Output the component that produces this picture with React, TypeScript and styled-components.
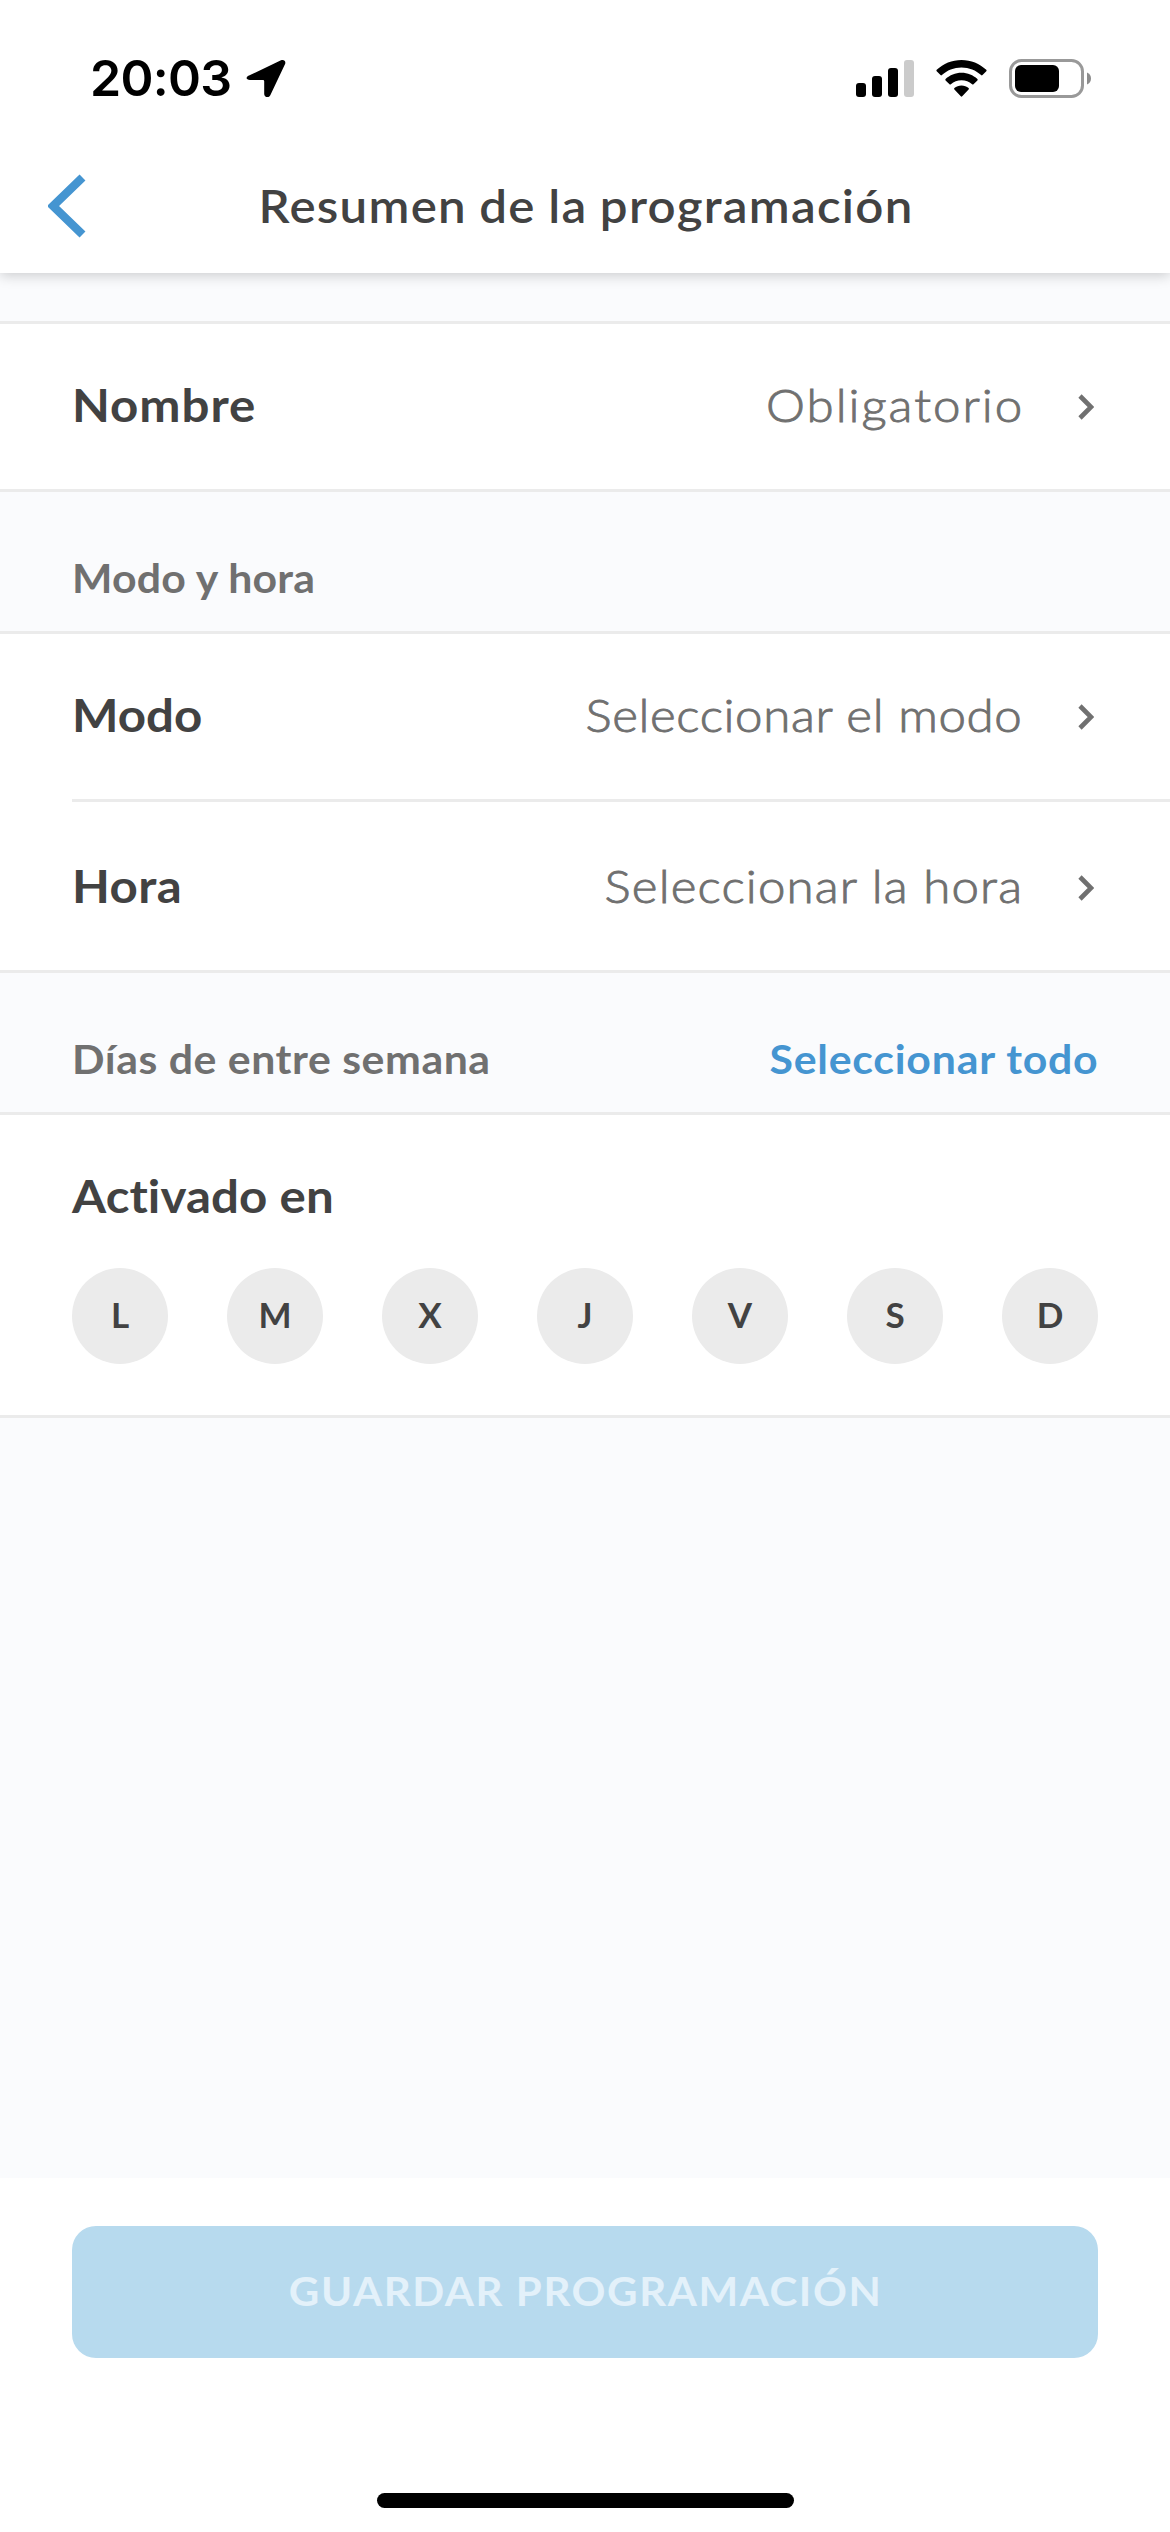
import React from "react";
import styled, { createGlobalStyle } from "styled-components";

const color = {
  ink: "#424242",
  muted: "#707070",
  blue: "#4595d1",
  line: "#ebebeb",
  page: "#fafbfd",
  button: "#b7daee",
  buttonText: "#e3f1fa",
};

const GlobalStyle = createGlobalStyle`
  *, *::before, *::after { box-sizing: border-box; }
  body { margin: 0; background: #fff; }
  button { border: 0; margin: 0; padding: 0; background: none; font: inherit; color: inherit; }
`;

const Screen = styled.div`
  display: flex;
  flex-direction: column;
  width: 1170px;
  height: 2532px;
  overflow: hidden;
  background: ${color.page};
  color: ${color.ink};
  font-family: Lato, "Open Sans", sans-serif;
`;

const Text = styled.span<{ $track: number; $stretch?: number; $origin?: "left" | "center" | "right" }>`
  display: inline-block;
  letter-spacing: ${(p) => p.$track}px;
  margin-right: ${(p) => -p.$track}px;
  white-space: pre;
  transform: scaleX(${(p) => p.$stretch ?? 1.07});
  transform-origin: ${(p) => p.$origin ?? "left"} center;
`;

const Header = styled.header`
  position: relative;
  z-index: 1;
  flex: none;
  height: 273px;
  background: #fff;
  box-shadow: 0 3px 12px rgba(0, 0, 0, 0.18);
`;

const StatusBar = styled.div`
  display: flex;
  justify-content: space-between;
  height: 140px;
  padding: 48px 79px 0 90px;
`;

const StatusGroup = styled.div<{ $gap: number }>`
  display: flex;
  align-items: center;
  gap: ${(p) => p.$gap}px;
  height: 60px;
  color: #000;
`;

const Clock = styled.span`
  margin-right: 1px;
  font-family: Inter, sans-serif;
  font-size: 50px;
  font-weight: 600;
  line-height: 60px;
  letter-spacing: -0.7px;
`;

const NavBar = styled.div`
  display: grid;
  grid-template-columns: 120px 1fr 120px;
  align-items: center;
  height: 132px;
`;

const BackButton = styled.button`
  display: flex;
  padding-left: 48px;
  color: ${color.blue};
`;

const Title = styled.h1`
  margin: 0;
  text-align: center;
  font-size: 46px;
  font-weight: 600;
  line-height: 56px;
  word-spacing: -1px;
`;

const Content = styled.main`
  flex: 1;
  padding-top: 48px;
`;

const Group = styled.section`
  background: #fff;
  border-top: 3px solid ${color.line};
  border-bottom: 3px solid ${color.line};
`;

const Row = styled.div`
  display: flex;
  align-items: center;
  height: 165px;
  padding: 0 76px 0 72px;
`;

const Divider = styled.hr`
  height: 3px;
  margin: 0 0 3px 72px;
  border: 0;
  background: ${color.line};
`;

const Label = styled.span`
  padding-bottom: 3px;
  font-size: 46px;
  font-weight: 700;
  line-height: 56px;
`;

const Value = styled.span`
  margin-left: auto;
  padding-bottom: 3px;
  color: ${color.muted};
  font-size: 46px;
  font-weight: 300;
  line-height: 56px;
  -webkit-text-stroke: 0.9px ${color.muted};
`;

const Chevron = styled.svg`
  flex: none;
  margin-left: 56px;
  color: ${color.muted};
`;

const SectionHeader = styled.div`
  display: flex;
  align-items: flex-end;
  justify-content: space-between;
  height: 139px;
  padding: 0 72px 29px;
  color: ${color.muted};
  font-size: 40px;
  font-weight: 700;
  line-height: 48px;
`;

const SelectAll = styled.button`
  color: ${color.blue};
`;

const DaysPanel = styled.div`
  padding: 53px 72px 51px;
`;

const DaysTitle = styled.div`
  height: 55px;
  margin-bottom: 45px;
  font-size: 46px;
  font-weight: 700;
  line-height: 55px;
`;

const Days = styled.div`
  display: flex;
  justify-content: space-between;
`;

const Day = styled.button`
  width: 96px;
  height: 96px;
  padding-bottom: 5px;
  border-radius: 50%;
  background: ${color.line};
  font-size: 35px;
  font-weight: 700;
  line-height: 44px;
`;

const Footer = styled.footer`
  display: flex;
  flex-direction: column;
  align-items: center;
  justify-content: space-between;
  flex: none;
  height: 354px;
  padding: 48px 72px 24px;
  background: #fff;
`;

const SaveButton = styled.button`
  width: 100%;
  height: 132px;
  padding-bottom: 3px;
  border-radius: 24px;
  background: ${color.button};
  color: ${color.buttonText};
  font-size: 40px;
  font-weight: 700;
`;

const HomeIndicator = styled.div`
  width: 417px;
  height: 15px;
  border-radius: 8px;
  background: #000;
`;

const LocationIcon = () => (
  <svg width="40" height="40" viewBox="0 0 40 40">
    <path
      d="M3 17.5 35 2.3 C37.5 1.1 40 2.9 39.2 5.7 L24.3 37.2 C23 40.1 18.2 39.6 18.2 36 V23.2 Q18.2 22 17 22 H4 C0 22 -.7 19.2 3 17.5Z"
      fill="currentColor"
    />
  </svg>
);

const SignalIcon = () => (
  <svg width="58" height="37" viewBox="0 0 58 37" fill="currentColor">
    <rect x="0" y="23" width="10" height="14" rx="3" />
    <rect x="16" y="16" width="10" height="21" rx="3" />
    <rect x="32" y="8" width="10" height="29" rx="3" />
    <rect x="48" y="0" width="10" height="37" rx="3" fill="#cbcbcb" />
  </svg>
);

const WifiIcon = () => (
  <svg width="51" height="37" viewBox="0 0 51 37" fill="currentColor">
    <path d="M25.5 0C35 0 43.700 3.700 50.300 9.800Q51 10.500 50.300 11.200L46.500 15.100Q45.800 15.700 45.100 15.100C40 10.300 33 7.500 25.500 7.500S11 10.300 5.900 15.100Q5.200 15.700 4.500 15.100L.7 11.200Q0 10.500.7 9.800C7.300 3.700 16 0 25.500 0Z" />
    <path d="M25.500 12.800C31.700 12.800 37.200 15.200 41.400 19Q42.100 19.700 41.400 20.400L37.500 24.300Q36.800 24.900 36.100 24.300C33.200 21.800 29.600 20.300 25.500 20.300S17.800 21.800 14.900 24.300Q14.200 24.900 13.500 24.300L9.600 20.400Q8.900 19.700 9.600 19C13.800 15.200 19.300 12.800 25.500 12.800Z" />
    <path d="M25.500 25.500C28.200 25.500 30.700 26.500 32.600 28.100Q33.300 28.800 32.600 29.500L26.200 36.300Q25.500 37 24.800 36.300L18.400 29.500Q17.700 28.800 18.400 28.100C20.300 26.500 22.800 25.500 25.500 25.500Z" />
  </svg>
);

const BatteryIcon = () => (
  <svg width="82" height="39" viewBox="0 0 82 39">
    <rect x="1.500" y="1.500" width="72" height="36" rx="11" fill="none" stroke="#999" strokeWidth="3" />
    <rect x="6" y="6" width="44" height="27" rx="6" fill="currentColor" />
    <path d="M78 13.500C80.500 14.500 82 16.800 82 19.500S80.500 24.500 78 25.500Z" fill="#8c8c8c" />
  </svg>
);

const BackIcon = () => (
  <svg width="38" height="64" viewBox="0 0 38 64">
    <path d="M34.500 3.500 5 32 34.500 60.500" fill="none" stroke="currentColor" strokeWidth="8.500" />
  </svg>
);

const ChevronIcon = () => (
  <Chevron width="16" height="26" viewBox="0 0 16 26">
    <path d="M2 2 13 13 2 24" fill="none" stroke="currentColor" strokeWidth="4.600" />
  </Chevron>
);

type RowProps = { label: string; labelTrack: number; value: string; valueTrack: number };

const SettingRow = ({ label, labelTrack, value, valueTrack }: RowProps) => (
  <Row>
    <Label>
      <Text $track={labelTrack}>{label}</Text>
    </Label>
    <Value>
      <Text $track={valueTrack} $origin="right">{value}</Text>
    </Value>
    <ChevronIcon />
  </Row>
);

const weekdays = ["L", "M", "X", "J", "V", "S", "D"];

export default function App() {
  return (
    <Screen>
      <GlobalStyle />
      <Header>
        <StatusBar>
          <StatusGroup $gap={14}>
            <Clock>20:03</Clock>
            <LocationIcon />
          </StatusGroup>
          <StatusGroup $gap={22}>
            <SignalIcon />
            <WifiIcon />
            <BatteryIcon />
          </StatusGroup>
        </StatusBar>
        <NavBar>
          <BackButton aria-label="Atrás">
            <BackIcon />
          </BackButton>
          <Title>
            <Text $track={1.18} $origin="center">Resumen de la programación</Text>
          </Title>
        </NavBar>
      </Header>

      <Content>
        <Group>
          <SettingRow label="Nombre" labelTrack={0.9} value="Obligatorio" valueTrack={1.87} />
        </Group>

        <SectionHeader>
          <Text $track={0.22}>Modo y hora</Text>
        </SectionHeader>
        <Group>
          <SettingRow label="Modo" labelTrack={0} value="Seleccionar el modo" valueTrack={0.6} />
          <Divider />
          <SettingRow label="Hora" labelTrack={0.4} value="Seleccionar la hora" valueTrack={1.08} />
        </Group>

        <SectionHeader>
          <Text $track={0.5}>Días de entre semana</Text>
          <SelectAll>
            <Text $track={0.72} $origin="right">Seleccionar todo</Text>
          </SelectAll>
        </SectionHeader>
        <Group>
          <DaysPanel>
            <DaysTitle>
              <Text $track={0.1}>Activado en</Text>
            </DaysTitle>
            <Days>
              {weekdays.map((day) => (
                <Day key={day}>{day}</Day>
              ))}
            </Days>
          </DaysPanel>
        </Group>
      </Content>

      <Footer>
        <SaveButton>
          <Text $track={1.49} $stretch={1.05} $origin="center">GUARDAR PROGRAMACIÓN</Text>
        </SaveButton>
        <HomeIndicator />
      </Footer>
    </Screen>
  );
}
